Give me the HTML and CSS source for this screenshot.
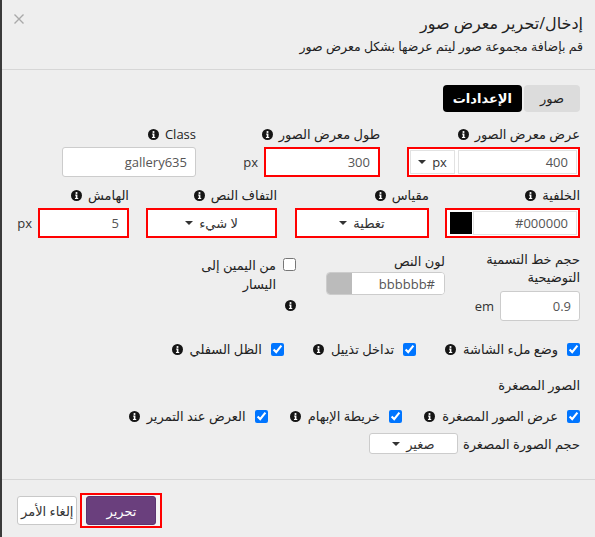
FILE: index.html
```html
<!DOCTYPE html>
<html lang="ar" dir="rtl">
<head>
<meta charset="utf-8">
<title>معرض صور</title>
<link rel="stylesheet" href="styles.css">
</head>
<body>
<div class="dialog">
  <header class="head">
    <div class="titles">
      <h1 class="title">إدخال/تحرير معرض صور</h1>
      <p class="subtitle">قم بإضافة مجموعة صور ليتم عرضها بشكل معرض صور</p>
    </div>
    <span class="close"><svg viewBox="0 0 10 10" width="10" height="10"><path d="M0.5 0.5L9.5 9.5M9.5 0.5L0.5 9.5" stroke="#a9a9a9" stroke-width="1.4" fill="none"/></svg></span>
  </header>

  <main class="content">
    <div class="tabs">
      <span class="tab">صور</span>
      <span class="tab tab-active">الإعدادات</span>
    </div>

    <div class="row row1">
      <div class="field f-gw">
        <div class="lbl"><span>عرض معرض الصور</span><svg class="info" viewBox="0 0 12 12"><circle cx="6" cy="6" r="6" fill="#151515"/><circle cx="6" cy="3.2" r="1.15" fill="#fff"/><path d="M4.6 5h2.4v3.7h0.9v1.2h-3.6v-1.2h0.9v-2.5h-0.6z" fill="#fff"/></svg></div>
        <div class="combo hl">
          <input class="inp inp-in" value="400">
          <div class="sel sel-unit"><span>px</span><i class="caret"></i></div>
        </div>
      </div>
      <div class="field f-gh">
        <div class="lbl"><span>طول معرض الصور</span><svg class="info" viewBox="0 0 12 12"><circle cx="6" cy="6" r="6" fill="#151515"/><circle cx="6" cy="3.2" r="1.15" fill="#fff"/><path d="M4.6 5h2.4v3.7h0.9v1.2h-3.6v-1.2h0.9v-2.5h-0.6z" fill="#fff"/></svg></div>
        <div class="unitrow">
          <input class="inp hl inp-h" value="300">
          <span class="unit">px</span>
        </div>
      </div>
      <div class="field f-cls">
        <div class="lbl"><span>Class</span><svg class="info" viewBox="0 0 12 12"><circle cx="6" cy="6" r="6" fill="#151515"/><circle cx="6" cy="3.2" r="1.15" fill="#fff"/><path d="M4.6 5h2.4v3.7h0.9v1.2h-3.6v-1.2h0.9v-2.5h-0.6z" fill="#fff"/></svg></div>
        <input class="inp" value="gallery635">
      </div>
    </div>

    <div class="row row2">
      <div class="field f-bg">
        <div class="lbl"><span>الخلفية</span><svg class="info" viewBox="0 0 12 12"><circle cx="6" cy="6" r="6" fill="#151515"/><circle cx="6" cy="3.2" r="1.15" fill="#fff"/><path d="M4.6 5h2.4v3.7h0.9v1.2h-3.6v-1.2h0.9v-2.5h-0.6z" fill="#fff"/></svg></div>
        <div class="color hl">
          <input class="inp inp-in" value="#000000">
          <span class="swatch swatch-black"></span>
        </div>
      </div>
      <div class="field f-scale">
        <div class="lbl"><span>مقياس</span><svg class="info" viewBox="0 0 12 12"><circle cx="6" cy="6" r="6" fill="#151515"/><circle cx="6" cy="3.2" r="1.15" fill="#fff"/><path d="M4.6 5h2.4v3.7h0.9v1.2h-3.6v-1.2h0.9v-2.5h-0.6z" fill="#fff"/></svg></div>
        <div class="sel sel-box hl"><span>تغطية</span><i class="caret"></i></div>
      </div>
      <div class="field f-wrap">
        <div class="lbl"><span>التفاف النص</span><svg class="info" viewBox="0 0 12 12"><circle cx="6" cy="6" r="6" fill="#151515"/><circle cx="6" cy="3.2" r="1.15" fill="#fff"/><path d="M4.6 5h2.4v3.7h0.9v1.2h-3.6v-1.2h0.9v-2.5h-0.6z" fill="#fff"/></svg></div>
        <div class="sel sel-box hl"><span>لا شيء</span><i class="caret"></i></div>
      </div>
      <div class="field f-margin">
        <div class="lbl"><span>الهامش</span><svg class="info" viewBox="0 0 12 12"><circle cx="6" cy="6" r="6" fill="#151515"/><circle cx="6" cy="3.2" r="1.15" fill="#fff"/><path d="M4.6 5h2.4v3.7h0.9v1.2h-3.6v-1.2h0.9v-2.5h-0.6z" fill="#fff"/></svg></div>
        <div class="unitrow">
          <input class="inp hl inp-m" value="5">
          <span class="unit">px</span>
        </div>
      </div>
    </div>

    <div class="row row3">
      <div class="field f-font">
        <div class="lbl-wrap">حجم خط التسمية التوضيحية</div>
        <div class="unitrow">
          <input class="inp inp-em" value="0.9">
          <span class="unit">em</span>
        </div>
      </div>
      <div class="field f-tcolor">
        <div class="lbl lbl-tc"><span>لون النص</span></div>
        <div class="tcolor">
          <input class="inp inp-in" value="#bbbbbb">
          <span class="swatch swatch-gray"></span>
        </div>
      </div>
      <div class="field f-rtl">
        <label class="chk-wrap">
          <input type="checkbox" class="cb">
          <span class="chk-text">من اليمين إلى اليسار</span>
        </label>
        <svg class="info info-below" viewBox="0 0 12 12"><circle cx="6" cy="6" r="6" fill="#151515"/><circle cx="6" cy="3.2" r="1.15" fill="#fff"/><path d="M4.6 5h2.4v3.7h0.9v1.2h-3.6v-1.2h0.9v-2.5h-0.6z" fill="#fff"/></svg>
      </div>
    </div>

    <div class="checks checks1">
      <label class="chk"><input type="checkbox" class="cb" checked><span>وضع ملء الشاشة</span><svg class="info" viewBox="0 0 12 12"><circle cx="6" cy="6" r="6" fill="#151515"/><circle cx="6" cy="3.2" r="1.15" fill="#fff"/><path d="M4.6 5h2.4v3.7h0.9v1.2h-3.6v-1.2h0.9v-2.5h-0.6z" fill="#fff"/></svg></label>
      <label class="chk"><input type="checkbox" class="cb" checked><span>تداخل تذييل</span><svg class="info" viewBox="0 0 12 12"><circle cx="6" cy="6" r="6" fill="#151515"/><circle cx="6" cy="3.2" r="1.15" fill="#fff"/><path d="M4.6 5h2.4v3.7h0.9v1.2h-3.6v-1.2h0.9v-2.5h-0.6z" fill="#fff"/></svg></label>
      <label class="chk"><input type="checkbox" class="cb" checked><span>الظل السفلي</span><svg class="info" viewBox="0 0 12 12"><circle cx="6" cy="6" r="6" fill="#151515"/><circle cx="6" cy="3.2" r="1.15" fill="#fff"/><path d="M4.6 5h2.4v3.7h0.9v1.2h-3.6v-1.2h0.9v-2.5h-0.6z" fill="#fff"/></svg></label>
    </div>

    <div class="section">الصور المصغرة</div>

    <div class="checks checks2">
      <label class="chk"><input type="checkbox" class="cb" checked><span>عرض الصور المصغرة</span><svg class="info" viewBox="0 0 12 12"><circle cx="6" cy="6" r="6" fill="#151515"/><circle cx="6" cy="3.2" r="1.15" fill="#fff"/><path d="M4.6 5h2.4v3.7h0.9v1.2h-3.6v-1.2h0.9v-2.5h-0.6z" fill="#fff"/></svg></label>
      <label class="chk"><input type="checkbox" class="cb" checked><span>خريطة الإبهام</span><svg class="info" viewBox="0 0 12 12"><circle cx="6" cy="6" r="6" fill="#151515"/><circle cx="6" cy="3.2" r="1.15" fill="#fff"/><path d="M4.6 5h2.4v3.7h0.9v1.2h-3.6v-1.2h0.9v-2.5h-0.6z" fill="#fff"/></svg></label>
      <label class="chk"><input type="checkbox" class="cb" checked><span>العرض عند التمرير</span><svg class="info" viewBox="0 0 12 12"><circle cx="6" cy="6" r="6" fill="#151515"/><circle cx="6" cy="3.2" r="1.15" fill="#fff"/><path d="M4.6 5h2.4v3.7h0.9v1.2h-3.6v-1.2h0.9v-2.5h-0.6z" fill="#fff"/></svg></label>
    </div>

    <div class="thumbsize">
      <span class="ts-label">حجم الصورة المصغرة</span>
      <div class="sel sel-small"><span>صغير</span><i class="caret"></i></div>
    </div>
  </main>

  <footer class="foot">
    <span class="btn-hl"><button class="btn btn-primary">تحرير</button></span>
    <button class="btn btn-cancel">إلغاء الأمر</button>
  </footer>
</div>
</body>
</html>
```

FILE: styles.css
```css
* { box-sizing: border-box; }
html { background: #3a3a3a; }
body {
  margin: 0;
  font-family: "Open Sans", "DejaVu Sans", sans-serif;
  font-size: 13px;
  color: #222;
}
.dialog {
  width: 593px;
  height: 537px;
  background: #eeeeee;
  display: flex;
  flex-direction: column;
}
.head {
  flex: none;
  height: 70px;
  display: flex;
  justify-content: space-between;
  align-items: flex-start;
  padding: 12px 12px 0 12px;
  border-bottom: 1px solid #d6d6d6;
}
.title {
  margin: 0;
  font-size: 16px;
  font-weight: normal;
  line-height: 22px;
  color: #222;
}
.subtitle {
  margin: 4px 0 0;
  font-size: 12.5px;
  line-height: 18px;
  color: #222;
}
.close {
  display: flex;
  margin: 2px 0 0 0;
}
.content {
  flex: 1;
  padding: 15px 15px 0;
}
.tabs {
  display: flex;
  gap: 2px;
}
.tab {
  height: 27px;
  line-height: 27px;
  padding: 0 16px;
  border-radius: 4px;
  background: #dcdcdc;
  color: #222;
}
.tab-active {
  padding: 0 10px;
  background: #000;
  color: #fff;
  font-weight: bold;
}
.row {
  display: flex;
  align-items: flex-start;
}
.row1 { margin-top: 13px; }
.row2 { margin-top: 9px; }
.row3 { margin-top: 8px; }
.lbl {
  display: flex;
  align-items: center;
  gap: 6px;
  height: 18px;
  line-height: 18px;
  margin-bottom: 4px;
  white-space: nowrap;
}
.info {
  width: 11px;
  height: 11px;
  flex: none;
  display: block;
}
.inp {
  display: block;
  width: 100%;
  height: 30px;
  border: 1px solid #ccc;
  border-radius: 3px;
  background: #fff;
  font-family: inherit;
  font-size: 13px;
  color: #555;
  padding: 0 8px;
  text-align: right;
  outline: none;
}
.hl {
  border: 2px solid #ff0000;
  border-radius: 0;
}
.unitrow {
  display: flex;
  align-items: center;
  gap: 6px;
}
.unit { color: #333; }

/* row 1 */
.f-gw { width: 173px; }
.f-gh { width: 136px; margin-inline-start: 27px; }
.f-cls { width: 134px; margin-inline-start: 48px; }
.inp-h { width: 116px; }
.combo {
  display: flex;
  height: 30px;
  background: #fff;
  padding: 1px;
  gap: 3px;
}
.inp-in {
  flex: 1;
  width: auto;
  min-width: 0;
  height: 100%;
  border: 1px solid #e2e2e2;
  border-radius: 0;
}
.sel {
  display: flex;
  align-items: center;
  justify-content: center;
  gap: 6px;
  background: #fff;
  color: #333;
}
.sel-unit {
  width: 45px;
  border: 1px solid #e2e2e2;
}
.caret {
  display: block;
  width: 0;
  height: 0;
  border-left: 4px solid transparent;
  border-right: 4px solid transparent;
  border-top: 4px solid #333;
}

/* row 2 */
.f-bg { width: 135px; }
.f-scale { width: 134px; margin-inline-start: 16px; }
.f-wrap { width: 131px; margin-inline-start: 18px; }
.f-margin { margin-inline-start: 17px; }
.color {
  display: flex;
  height: 30px;
  background: #fff;
  padding: 1px;
}
.swatch { display: block; flex: none; }
.swatch-black {
  width: 22px;
  background: #000;
  margin: 1px 1px 1px 2px;
}
.sel-box { height: 30px; }
.inp-m { width: 91px; }

/* row 3 */
.f-font { width: 135px; }
.lbl-wrap {
  width: 110px;
  line-height: 18px;
  margin: 4px 0 5px;
}
.inp-em { width: 80px; }
.f-tcolor { width: 149px; }
.lbl-tc { margin-top: 6px; margin-bottom: 2px; }
.tcolor {
  display: flex;
  width: 119px;
  height: 23px;
  border: 1px solid #ccc;
  border-radius: 4px;
  background: #fff;
  overflow: hidden;
}
.tcolor .inp-in { border: 0; padding-right: 9px; }
.swatch-gray {
  width: 25px;
  background: #bbbbbb;
}
.f-rtl { width: 110px; margin-top: 8px; }
.chk-wrap {
  display: flex;
  align-items: flex-start;
  gap: 7px;
}
.cb {
  width: 13px;
  height: 13px;
  margin: 0;
  flex: none;
  accent-color: #0075ff;
}
.chk-wrap .cb { margin-top: 4px; }
.chk-text {
  width: 82px;
  line-height: 19px;
  padding-top: 2px;
}
.info-below { margin-top: 6px; }

/* checks */
.checks {
  display: flex;
  align-items: center;
}
.checks1 { margin-top: 19px; gap: 29px; }
.checks2 { margin-top: 13px; gap: 22px; }
.chk {
  display: flex;
  align-items: center;
  gap: 7px;
  height: 18px;
  white-space: nowrap;
}
.chk span { margin-right: 2px; }
.section {
  margin-top: 18px;
  line-height: 18px;
}
.thumbsize {
  display: flex;
  align-items: center;
  gap: 5px;
  margin-top: 8px;
}
.ts-label { white-space: nowrap; }
.sel-small {
  width: 89px;
  height: 21px;
  border: 1px solid #ccc;
  border-radius: 3px;
}

/* footer */
.foot {
  flex: none;
  height: 58px;
  border-top: 1px solid #d6d6d6;
  display: flex;
  justify-content: flex-end;
  align-items: flex-start;
  gap: 3px;
  padding: 13px 15px 0;
}
.btn {
  font-family: inherit;
  font-size: 13px;
  height: 29px;
  border-radius: 3px;
  cursor: pointer;
  white-space: nowrap;
}
.btn-hl {
  display: block;
  border: 2px solid #ff0000;
  padding: 1px 4px;
  background: #f4f4f4;
}
.btn-primary {
  width: 70px;
  background: #6a3f7d;
  color: #fff;
  border: 1px solid #5c3470;
}
.btn-cancel {
  margin-top: 3px;
  padding: 0 3px;
  background: #fff;
  color: #333;
  border: 1px solid #c8c8c8;
}
```
